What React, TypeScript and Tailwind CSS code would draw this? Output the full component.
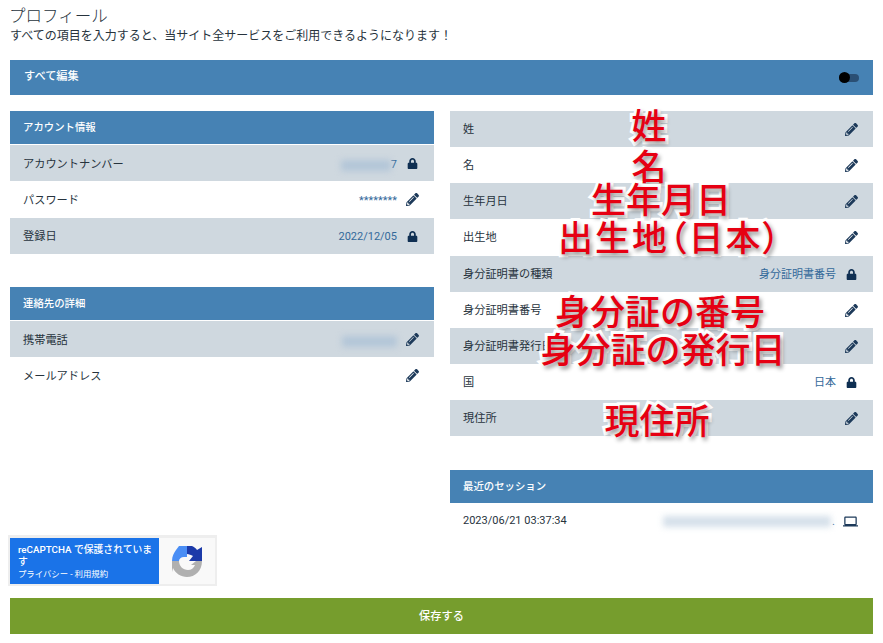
import React from "react";
import { FaLock, FaPencilAlt } from "react-icons/fa";
import { MdOutlineLaptop } from "react-icons/md";

const Lock = () => <FaLock className="text-[#0f2f52] w-[11px] h-[11px]" />;
const Pencil = () => <FaPencilAlt className="text-[#1d3a5a] w-[13px] h-[13px]" />;

function Row({ label, value, icon, shaded, h = "h-9", lift = "pt-[2px]" }: { label: string; value?: React.ReactNode; icon: React.ReactNode; shaded?: boolean; h?: string; lift?: string }) {
  return (
    <div className={`${h} flex items-center pl-[13px] pr-[15px] ${shaded ? "bg-[#cfd8df]" : "bg-white"}`}>
      <span className={`text-[11.2px] text-[#27333d] ${lift}`}>{label}</span>
      <span className={`ml-auto mr-[9px] text-[11px] text-[#33699a] flex items-center ${lift}`}>{value}</span>
      <span className="w-[13px] flex justify-center">{icon}</span>
    </div>
  );
}

function Head({ children }: { children: React.ReactNode }) {
  return <div className="h-[33px] flex items-center pl-[13px] bg-[#4682b4] text-white text-[10.4px] font-medium mb-px">{children}</div>;
}

function Blur({ w, tone }: { w: string; tone: string }) {
  return <span className={`inline-block ${w} ${tone} h-[11px] blur-[3px]`} />;
}

function Note({ className, children }: { className: string; children: string }) {
  return (
    <span className={`absolute -translate-x-1/2 whitespace-nowrap text-[35px] leading-none font-medium text-[#e60012] [-webkit-text-stroke:6px_white] [paint-order:stroke_fill] [text-shadow:2px_3px_4px_rgba(0,0,0,0.45)] ${className}`}>
      {children}
    </span>
  );
}

export default function App() {
  return (
    <div className="w-[883px] h-[643px] bg-white px-[10px] pt-[6px] font-['Roboto','Noto_Sans_CJK_JP',sans-serif] overflow-hidden">
      <h1 className="text-[16.5px] -ml-[1px] leading-[22px] font-light text-[#27333d]">プロフィール</h1>
      <p className="text-[12px] leading-[16px] text-[#27333d]">すべての項目を入力すると、当サイト全サービスをご利用できるようになります！</p>

      <div className="mt-[16px] h-[35px] bg-[#4682b4] flex items-center pl-[14px] pr-[14px]">
        <span className="text-white text-[11.2px] font-medium">すべて編集</span>
        <span className="ml-auto relative w-[20px] h-[8px] rounded-full bg-[#2a4f74]">
          <span className="absolute left-0 -top-[1.5px] w-[11px] h-[11px] rounded-full bg-black" />
        </span>
      </div>

      <div className="mt-[16px] grid grid-cols-[424px_423px] gap-x-[16px] h-[475px]">
        <div className="flex flex-col">
          <Head>アカウント情報</Head>
          <Row shaded lift="pt-[4px]" label="アカウントナンバー" value={<><Blur w="w-[50px]" tone="bg-[#b3c6d8]" />7</>} icon={<Lock />} />
          <Row lift="pt-[4px]" label="パスワード" value="********" icon={<Pencil />} h="h-[37px]" />
          <Row shaded lift="pt-[2px]" label="登録日" value="2022/12/05" icon={<Lock />} />
          <div className="h-[33px]" />
          <Head>連絡先の詳細</Head>
          <Row shaded lift="pt-[4px]" label="携帯電話" value={<Blur w="w-[55px]" tone="bg-[#b3c6d8]" />} icon={<Pencil />} />
          <Row lift="pt-[4px]" label="メールアドレス" icon={<Pencil />} />
          <div className="mt-auto -ml-[2px] w-[209px] h-[51px] bg-[#eeeeee] pt-[3px] pb-[2px] px-[2px] flex">
            <div className="w-[149px] bg-[#1a73e8] text-white pl-[8px] pr-[6px] pt-[6px]">
              <div className="text-[9.8px] leading-[12px] font-medium">reCAPTCHA で保護されています</div>
              <div className="text-[8.4px] leading-[12px]">プライバシー - 利用規約</div>
            </div>
            <div className="w-[56px] bg-[#f9f9f9] flex items-center justify-center">
              <svg viewBox="0 0 32 33" className="w-[32px] h-[33px]">
                <path d="M8 1 H16 V12 H13 C10 12 8 14 8 16 H1 C1 11 3 8 5 5 Z" fill="#4a8ef5" />
                <path d="M16 1 H21 C23 2 25 3 26 5 L31 2 V16 H18 L22 11 C20 10 18 9 16 9 Z" fill="#1c3aa9" />
                <path d="M1 16 H8 C8 21 12 25 17 25 C20 25 23 23 24 20 L20 20 L25 16 H31 C31 26 24 32 16 32 C10 32 4 28 2 23 L1 27 Z" fill="#b0b0b0" />
              </svg>
            </div>
          </div>
        </div>

        <div className="flex flex-col relative">
          <Row shaded label="姓" icon={<Pencil />} />
          <Row label="名" icon={<Pencil />} />
          <Row shaded label="生年月日" icon={<Pencil />} />
          <Row label="出生地" icon={<Pencil />} h="h-[37px]" />
          <Row shaded label="身分証明書の種類" value="身分証明書番号" icon={<Lock />} />
          <Row label="身分証明書番号" icon={<Pencil />} />
          <Row shaded label="身分証明書発行日" icon={<Pencil />} />
          <Row label="国" value="日本" icon={<Lock />} />
          <Row shaded label="現住所" icon={<Pencil />} />
          <div className="h-[34px]" />
          <Head>最近のセッション</Head>
          <div className="h-[34px] flex items-center pl-[13px] pr-[15px]">
            <span className="text-[11px] text-[#27333d]">2023/06/21 03:37:34</span>
            <span className="ml-auto mr-[8px] text-[11px] text-[#33699a] leading-none flex items-center gap-[1px]">
              <Blur w="w-[168px]" tone="bg-[#d5e0ea]" />.
            </span>
            <MdOutlineLaptop className="text-[#1d3a5a] w-[15px] h-[15px]" />
          </div>

          <Note className="left-[199px] top-[-1px]">姓</Note>
          <Note className="left-[199px] top-[40px]">名</Note>
          <Note className="left-[211px] top-[73px]">生年月日</Note>
          <Note className="left-[220px] top-[111px] tracking-[2px] [font-feature-settings:'palt']">出生地（日本）</Note>
          <Note className="left-[210px] top-[185px]">身分証の番号</Note>
          <Note className="left-[213px] top-[223px]">身分証の発行日</Note>
          <Note className="left-[207px] top-[294px]">現住所</Note>
        </div>
      </div>

      <button className="mt-[12px] w-full h-[36px] pt-[2px] bg-[#769d2d] text-white text-[11.2px] font-medium">保存する</button>
    </div>
  );
}
